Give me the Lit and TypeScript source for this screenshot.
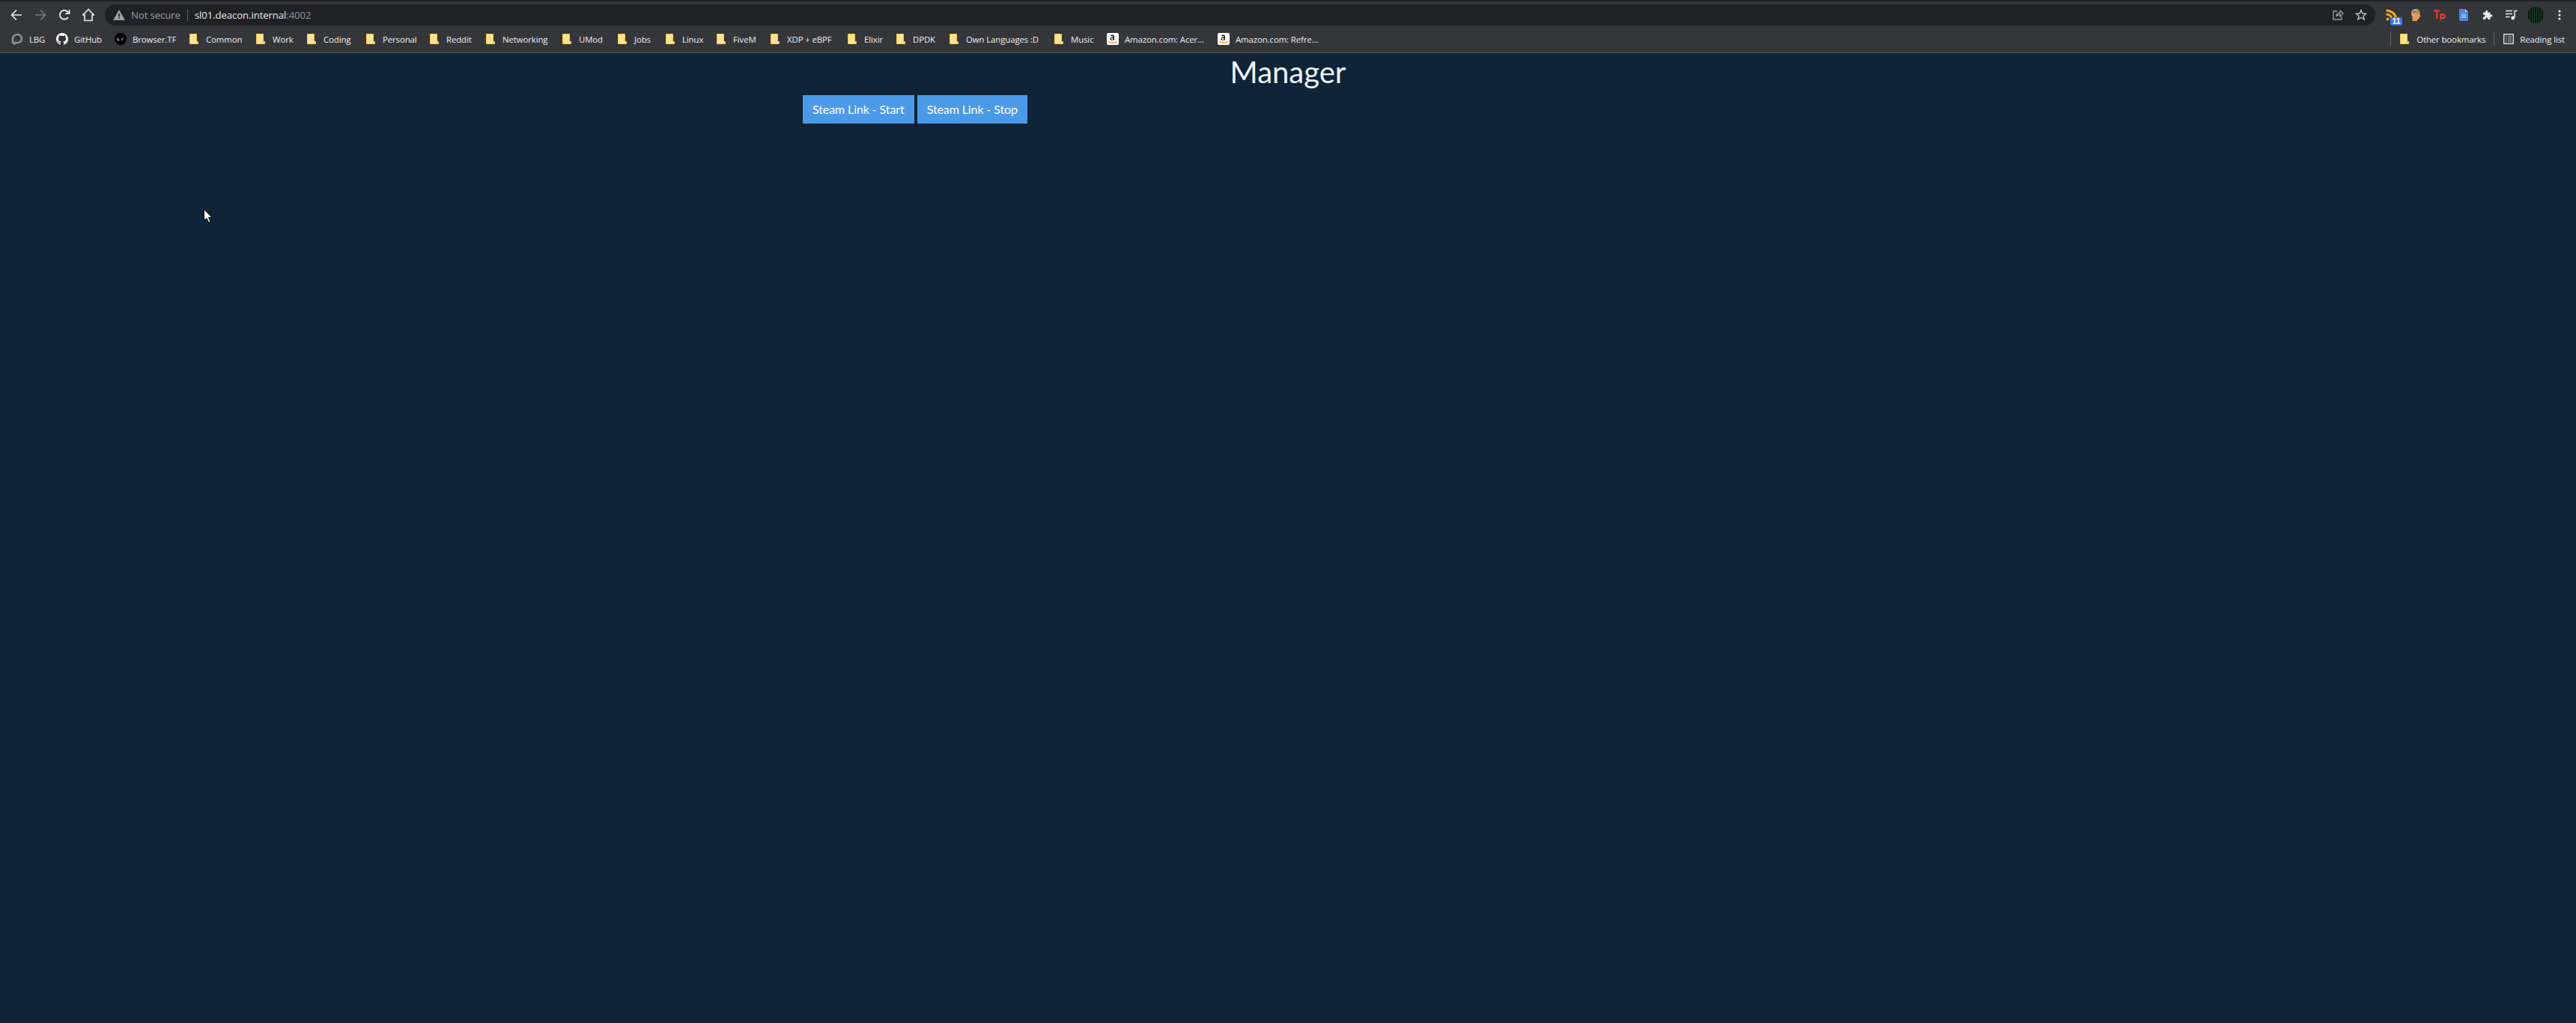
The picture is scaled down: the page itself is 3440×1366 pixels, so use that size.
import { LitElement, html, css, svg } from "lit";
import { customElement } from "lit/decorators.js";

const folder = svg`<svg width="12" height="14" viewBox="0 0 12 14"><path d="M.5.5H9.5V10.5H11.5V13.5H.5Z" fill="#fde293" stroke="#f6c945"/><path d="M9.5 10.5H11.5L9.5 13.5Z" fill="#f6c945"/></svg>`;
const lbg = svg`<svg width="16" height="16" viewBox="0 0 16 16"><path d="M8.500 2a5.500 5.500 0 0 1 0 11H4.500V14.500L2 13V7.500A6 6 0 0 1 8.500 2Z" fill="none" stroke="#8f8f8f" stroke-width="2.600"/></svg>`;
const gh = svg`<svg width="16" height="16" viewBox="0 0 16 16"><path fill="#fff" d="M8 0C3.58 0 0 3.58 0 8c0 3.54 2.29 6.53 5.47 7.59.4.07.55-.17.55-.38 0-.19-.01-.82-.01-1.49-2.01.37-2.53-.49-2.69-.94-.09-.23-.48-.94-.82-1.13-.28-.15-.68-.52-.01-.53.63-.01 1.08.58 1.23.82.72 1.21 1.87.87 2.33.66.07-.52.28-.87.51-1.07-1.78-.2-3.64-.89-3.64-3.95 0-.87.31-1.59.82-2.15-.08-.2-.36-1.02.08-2.12 0 0 .67-.21 2.2.82.64-.18 1.32-.27 2-.27s1.36.09 2 .27c1.53-1.04 2.2-.82 2.2-.82.44 1.1.16 1.92.08 2.12.51.56.82 1.27.82 2.15 0 3.07-1.87 3.75-3.65 3.95.29.25.54.73.54 1.48 0 1.07-.01 1.93-.01 2.2 0 .21.15.46.55.38A8 8 0 0 0 16 8c0-4.42-3.58-8-8-8Z"/></svg>`;
const tf = svg`<svg width="16" height="16" viewBox="0 0 16 16"><circle cx="8" cy="8" r="8" fill="#000"/><path d="M4 6v4M4 9h2v1H4M8 10h.5M10 7v3M10.500 6.500h1M9.500 8h2" stroke="#bbb" fill="none" stroke-width=".9"/></svg>`;
const amz = svg`<svg width="16" height="16" viewBox="0 0 16 16"><rect width="16" height="16" rx="2" fill="#fff"/><path d="M5 3.500C5.500 2.300 9.500 1.800 9.800 4V9.700H8.200V9C7 10.200 4.500 10 4.500 7.900 4.500 6 6.500 5.500 8.200 5.500V4.500C8 3.500 6.800 3.600 6.500 4.500Z" fill="#111"/><circle cx="7" cy="7.700" r="1.200" fill="#fff"/><path d="M2.500 11.500C5.500 14 10.500 14 13.500 11.500" fill="none" stroke="#f90" stroke-width="1.300"/></svg>`;

type Mark = { label: string; step: number; icon: unknown; fav: boolean };
const F = (label: string, step: number): Mark => ({ label, step, icon: folder, fav: false });
const G = (label: string, step: number, icon: unknown): Mark => ({ label, step, icon, fav: true });
const marks: Mark[] = [
  G("LBG", 60, lbg), G("GitHub", 78, gh), G("Browser.TF", 100, tf),
  F("Common", 89), F("Work", 68), F("Coding", 79), F("Personal", 85), F("Reddit", 75),
  F("Networking", 102), F("UMod", 74), F("Jobs", 64), F("Linux", 68), F("FiveM", 72),
  F("XDP + eBPF", 103), F("Elixir", 65), F("DPDK", 71), F("Own Languages :D", 140), F("Music", 70),
  G("Amazon.com: Acer...", 148, amz), G("Amazon.com: Refre...", 140, amz),
];

@customElement("app-root")
export class AppRoot extends LitElement {
  static styles = css`
    :host { display: flex; flex-direction: column; height: 1366px; background: #0f2439; font-family: "Open Sans", "Noto Sans", sans-serif; overflow: hidden; position: relative; }
    .tabs { height: 2px; background: #202124; flex: none; }
    .toolbar { height: 33px; flex: none; background: #35363a; display: flex; align-items: flex-start; padding: 4px 6px 0 14px; box-sizing: border-box; }
    .nav { display: flex; align-items: center; gap: 16px; width: 126px; height: 28px; flex: none; }
    .nav svg { flex: none; display: block; }
    .omni { flex: 1; height: 28px; margin-right: 6px; background: #202124; border-radius: 14px; display: flex; align-items: center; padding-left: 11px; font-size: 13.200px; letter-spacing: -0.1px; }
    .warn { margin-right: 8px; display: block; flex: none; }
    .ns { color: #9aa0a6; }
    .sep { width: 1px; height: 16px; background: #5f6368; margin: 0 9px 0 9px; }
    .host { color: #e8eaed; }
    .port { color: #8f9499; }
    .grow { flex: 1; }
    .omni svg.end { margin-right: 15px; display: block; }
    .omni svg.end:last-child { margin-right: 11px; }
    .ext { display: flex; align-items: center; height: 28px; flex: none; }
    .slot { width: 32px; height: 28px; display: flex; align-items: center; justify-content: center; flex: none; position: relative; }
    .slot svg { display: block; }
    .badge { position: absolute; left: 14px; top: 17px; width: 16px; height: 11px; border-radius: 2px; background: #3b78e7; color: #fff; font-size: 10px; font-weight: 700; line-height: 11px; text-align: center; font-family: "Liberation Sans", sans-serif; }
    .avatar { width: 22px; height: 22px; border-radius: 50%; background: repeating-linear-gradient(90deg, #1c3d24 0 1px, #0b1a10 1px 3px); }
    .marks { height: 36px; flex: none; background: #35363a; display: flex; align-items: center; padding: 0 15px 1px; box-sizing: border-box; border-bottom: 1px solid #595b5e; color: #eef0f2; font-size: 11.400px; letter-spacing: -0.1px; }
    .mark { display: flex; align-items: center; flex: none; white-space: nowrap; }
    .mark svg { display: block; flex: none; }
    .mark span { display: block; margin-left: 10px; }
    .mark.fav span { margin-left: 8px; }
    .right { display: flex; align-items: center; margin-left: auto; }
    .vr { width: 1px; height: 20px; background: #5f6368; }
    .right .mark { margin: 0 11px 0 12px; }
    .right .mark:last-child { margin-right: 0; }
    main { width: 1296px; margin: 0 auto; flex: none; }
    h1 { font-family: Lato, sans-serif; font-weight: 400; font-size: 40px; line-height: 48px; color: #f0f4f8; text-align: center; margin: 1px 0 7px; }
    .btns { display: flex; gap: 4px; }
    button { font-family: Lato, sans-serif; font-size: 16px; line-height: 20px; padding: 9px 13px; height: 38px; border: 0; border-radius: 0; background: #4b9ae8; color: #fff; letter-spacing: -0.1px; }
    .cursor { position: absolute; left: 272px; top: 279px; display: block; }
  `;

  render() {
    return html`
      <div class="tabs"></div>
      <div class="toolbar">
        <div class="nav">
          <svg width="16" height="16" viewBox="0 0 16 16"><path d="M15 8H2M8 1.500 1.500 8 8 14.500" fill="none" stroke="#e8eaed" stroke-width="1.700"/></svg>
          <svg width="16" height="16" viewBox="0 0 16 16"><path d="M1 8H14M8 1.500 14.500 8 8 14.500" fill="none" stroke="#77797d" stroke-width="1.700"/></svg>
          <svg width="16" height="16" viewBox="0 0 16 16"><path d="M13 11a6 6 0 1 1 0-6.500M14.500 1v5h-5" fill="none" stroke="#e8eaed" stroke-width="1.800"/></svg>
          <svg width="16" height="18" viewBox="0 0 16 18"><path d="M8 1.500 .8 9H3V16.500H13V9H15.200Z" fill="none" stroke="#e8eaed" stroke-width="1.700"/></svg>
        </div>
        <div class="omni">
          <svg class="warn" width="16" height="14" viewBox="0 0 16 14"><path d="M8 0 16 14H0Z" fill="#9aa0a6"/><path d="M7.200 5h1.600v4.500H7.200ZM7.200 10.500h1.600v1.500H7.200Z" fill="#202124"/></svg>
          <span class="ns">Not secure</span><span class="sep"></span>
          <span class="host">sl01.deacon.internal</span><span class="port">:4002</span>
          <span class="grow"></span>
          <svg class="end" width="16" height="16" viewBox="0 0 16 16"><path d="M7 3H2V14H13V10M6 10C6 6 9 5 11 5V2L15 6 11 10V7.500C9 7.500 7 8 6 10Z" fill="none" stroke="#9aa0a6" stroke-width="1.300"/></svg>
          <svg class="end" width="16" height="16" viewBox="0 0 16 16"><path d="M8 1.500 9.900 6 14.700 6.300 11 9.400 12.200 14.100 8 11.500 3.800 14.100 5 9.400 1.300 6.300 6.100 6Z" fill="none" stroke="#bdc1c6" stroke-width="1.400"/></svg>
        </div>
        <div class="ext">
          <div class="slot">
            <svg width="18" height="18" viewBox="0 0 18 18"><circle cx="3.500" cy="14.500" r="2" fill="#f2a31b"/><path d="M1.500 8A8.500 8.500 0 0 1 10 16.500M1.500 3A13.500 13.500 0 0 1 15 14" fill="none" stroke="#f2a31b" stroke-width="3"/></svg>
            <span class="badge">11</span>
          </div>
          <div class="slot">
            <svg width="14" height="18" viewBox="0 0 14 18"><path d="M7 1C3 1 1 3.500 1 7c0 2 .8 3 1.500 4V17H9V14.500H11.500V11.500H13.500L12.500 8.500C13 4 11 1 7 1Z" fill="#e89a5b"/><circle cx="5" cy="5" r="2" fill="#7d6fa8"/><circle cx="9.500" cy="5" r="2" fill="#6c9a5a"/></svg>
          </div>
          <div class="slot">
            <svg width="16" height="16" viewBox="0 0 16 16"><path d="M.5 2.500H8M4.300 2.500V13M9.500 15V6.500M9.500 7.500H12.500A2 2 0 0 1 12.500 12H9.500" fill="none" stroke="#e53935" stroke-width="2.300"/></svg>
          </div>
          <div class="slot">
            <svg width="12" height="16" viewBox="0 0 12 16"><path d="M1 0H8L12 4V15A1 1 0 0 1 11 16H1A1 1 0 0 1 0 15V1A1 1 0 0 1 1 0Z" fill="#4a86e8"/><path d="M8 0 12 4H8Z" fill="#a6c5f5"/><rect x="3" y="6.500" width="6" height="5.500" fill="#8ab4f8"/></svg>
          </div>
          <div class="slot">
            <svg width="14" height="14" viewBox="0 0 14 14"><path d="M1 3.500H4.200C4 2.800 4 .7 5.700 .7S7.400 2.800 7.200 3.500H10.500V6.600C11.200 6.400 13.400 6.400 13.400 8.100S11.200 9.800 10.500 9.600V13H7.200C7.400 12 7.200 10.500 5.700 10.500S4 12 4.200 13H1V9.800C2 10 3.500 9.700 3.500 8.100S2 6.300 1 6.500Z" fill="#e8eaed"/></svg>
          </div>
          <div class="slot">
            <svg width="16" height="14" viewBox="0 0 16 14"><path d="M0 1.500H9M0 5.500H9M0 9.500H5.500" stroke="#e8eaed" stroke-width="1.400"/><path d="M12 10.500V1.500H15.500" fill="none" stroke="#e8eaed" stroke-width="1.500"/><circle cx="9.700" cy="11" r="2.400" fill="#e8eaed"/></svg>
          </div>
          <div class="slot"><div class="avatar"></div></div>
          <div class="slot">
            <svg width="4" height="14" viewBox="0 0 4 14"><circle cx="2" cy="2" r="1.600" fill="#e8eaed"/><circle cx="2" cy="7" r="1.600" fill="#e8eaed"/><circle cx="2" cy="12" r="1.600" fill="#e8eaed"/></svg>
          </div>
        </div>
      </div>
      <div class="marks">
        ${marks.map(
          (m) => html`<div class="mark ${m.fav ? "fav" : ""}" style="width:${m.step}px">${m.icon}<span>${m.label}</span></div>`
        )}
        <div class="right">
          <div class="vr"></div>
          <div class="mark">${folder}<span>Other bookmarks</span></div>
          <div class="vr"></div>
          <div class="mark fav">
            <svg width="14" height="14" viewBox="0 0 14 14"><path d="M.7.7H13.300V13.300H.7Z" fill="none" stroke="#dadce0" stroke-width="1.400"/><path d="M3 4h1.500M3 7h1.500M3 10h1.500M6 4h5M6 7h5M6 10h5" stroke="#dadce0"/></svg>
            <span>Reading list</span>
          </div>
        </div>
      </div>
      <main>
        <h1>Manager</h1>
        <div class="btns"><button>Steam Link - Start</button><button>Steam Link - Stop</button></div>
      </main>
      <svg class="cursor" width="12" height="19" viewBox="0 0 12 19"><path d="M.5.500V15.500L4 12.500 6.500 18 9 17 6.500 11.500H11Z" fill="#fff" stroke="#000"/></svg>
    `;
  }
}
